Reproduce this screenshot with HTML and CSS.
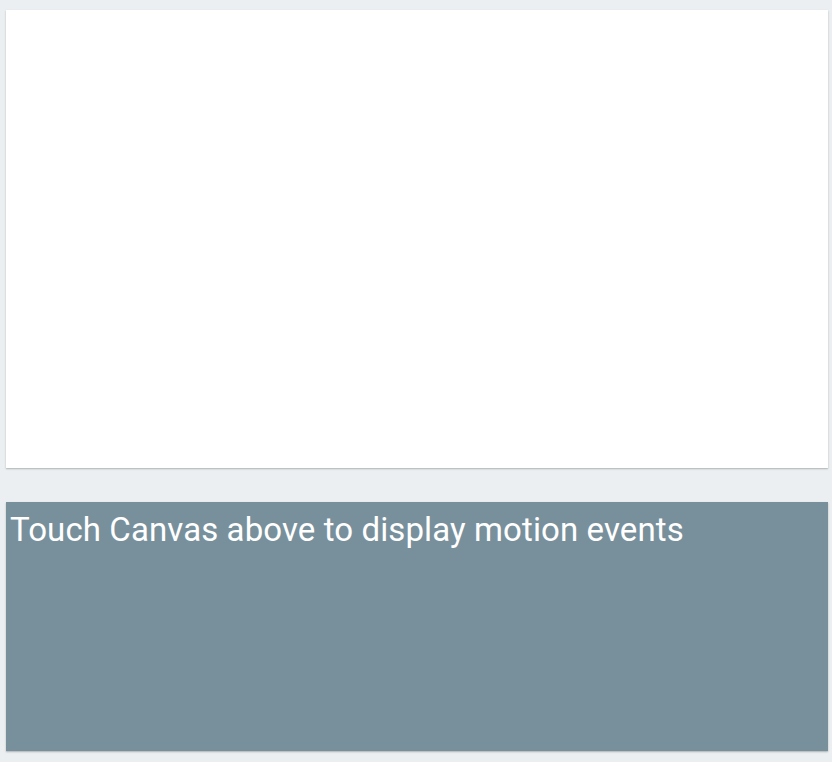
FILE: index.html
```html
<!DOCTYPE html>
<html>
<head>
<meta charset="utf-8">
<link rel="stylesheet" href="styles.css">
</head>
<body>
<div class="page">
  <div class="canvas"></div>
  <div class="events">Touch Canvas above to display motion events</div>
</div>
</body>
</html>
```
FILE: styles.css
```css
html, body { margin: 0; padding: 0; }
body { background: #eceff1; width: 832px; height: 762px; overflow: hidden; }
.page { display: flex; flex-direction: column; padding: 10px 4px 0 6px; gap: 34px; }
.canvas { height: 458px; background: #ffffff; box-shadow: 0 1px 2px rgba(0,0,0,0.18), 0 1px 1px rgba(0,0,0,0.08); }
.events { height: 249px; background: #78909c; color: #ffffff; font-family: Roboto, sans-serif; font-size: 33px; letter-spacing: 0.1px; line-height: 56px; padding-left: 4px; box-shadow: 0 1px 2px rgba(0,0,0,0.18), 0 1px 1px rgba(0,0,0,0.08); box-sizing: border-box; }
```
